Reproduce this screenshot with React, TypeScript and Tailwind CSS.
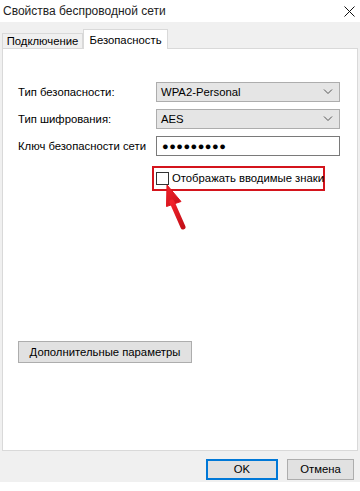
import React from "react";

const font = { fontFamily: '"Segoe UI", "Liberation Sans", Arial, sans-serif' };

function Chevron() {
  return (
    <svg width="10" height="6" viewBox="0 0 10 6" className="shrink-0">
      <path d="M1 0.5 L5 4.5 L9 0.5" fill="none" stroke="#555" strokeWidth="1" />
    </svg>
  );
}

function Select({ value }: { value: string }) {
  return (
    <div className="flex h-[20px] w-[184px] items-center justify-between border border-[#adadad] bg-[#e5e5e5] pl-[4px] pr-[6px] text-[11.3px] text-black">
      <span className="whitespace-nowrap">{value}</span>
      <Chevron />
    </div>
  );
}

export default function App() {
  return (
    <div className="relative h-[491px] w-[360px] overflow-hidden bg-white text-black" style={font}>
      <div className="flex h-[22px] items-center justify-between bg-white pl-[3px] pr-[5px]">
        <span className="whitespace-nowrap text-[12px] leading-none text-[#222]">Свойства беспроводной сети</span>
        <svg width="11" height="11" viewBox="0 0 11 11">
          <path d="M0.5 0.5 L10.5 10.5 M10.5 0.5 L0.5 10.5" stroke="#111" strokeWidth="1" />
        </svg>
      </div>
      <div className="h-[460px] bg-[#f0f0f0] pt-[7px]">
        <div className="flex h-[19px] items-end pl-[2px]">
          <div className="flex h-[15px] w-[81px] items-center justify-center whitespace-nowrap border border-b-0 border-[#d9d9d9] bg-[#f0f0f0] text-[11.3px]">
            Подключение
          </div>
          <div className="relative z-10 -mb-px flex h-[20px] w-[85px] items-start justify-center whitespace-nowrap border border-b-0 border-[#d9d9d9] bg-white pt-[2px] text-[11.3px]">
            Безопасность
          </div>
        </div>
        <div className="relative ml-[2px] flex h-[403px] w-[356px] flex-col border border-[#d9d9d9] bg-white pl-[15px] pt-[33px]">
          <div className="flex flex-col gap-[7px] text-[11.3px]">
            <div className="flex items-center">
              <span className="w-[138px] whitespace-nowrap">Тип безопасности:</span>
              <Select value="WPA2-Personal" />
            </div>
            <div className="flex items-center">
              <span className="w-[138px] whitespace-nowrap">Тип шифрования:</span>
              <Select value="AES" />
            </div>
            <div className="flex items-center">
              <span className="w-[138px] whitespace-nowrap">Ключ безопасности сети</span>
              <div className="flex h-[20px] w-[184px] items-center border border-[#7a7a7a] bg-white pl-[5px] text-[11px] tracking-[0.5px]">
                ●●●●●●●●●
              </div>
            </div>
          </div>
          <div className="ml-[134px] mt-[10px] flex h-[25px] w-[173px] items-center border-2 border-[#d4141c] pl-[2px] text-[11.3px]">
            <div className="h-[13px] w-[13px] shrink-0 border border-[#333] bg-white" />
            <span className="ml-[3px] whitespace-nowrap">Отображать вводимые знаки</span>
          </div>
          <svg
            className="absolute left-[150px] top-[130px]"
            width="40"
            height="54"
            viewBox="0 0 40 54"
          >
            <defs>
              <linearGradient id="ag" x1="0" y1="0" x2="1" y2="1">
                <stop offset="0" stopColor="#f2232b" />
                <stop offset="1" stopColor="#c40f18" />
              </linearGradient>
            </defs>
            <path d="M14 6 L28 22.5 L13.5 27.5 Z" fill="url(#ag)" stroke="#e0141e" strokeWidth="1" strokeLinejoin="round" />
            <path d="M19 23 L30 48" stroke="url(#ag)" strokeWidth="5" strokeLinecap="round" />
          </svg>
          <div className="mt-[150px] flex h-[22px] w-[174px] items-center justify-center whitespace-nowrap border border-[#adadad] bg-[#e1e1e1] text-[11.3px]">
            Дополнительные параметры
          </div>
        </div>
        <div className="flex justify-end gap-[9px] pr-[6px] pt-[8px]">
          <div className="flex h-[21px] w-[72px] items-center justify-center border-2 border-[#0078d7] bg-[#e1e1e1] text-[11.3px]">
            OK
          </div>
          <div className="flex h-[21px] w-[67px] items-center justify-center border border-[#adadad] bg-[#e1e1e1] text-[11.3px]">
            Отмена
          </div>
        </div>
      </div>
    </div>
  );
}
